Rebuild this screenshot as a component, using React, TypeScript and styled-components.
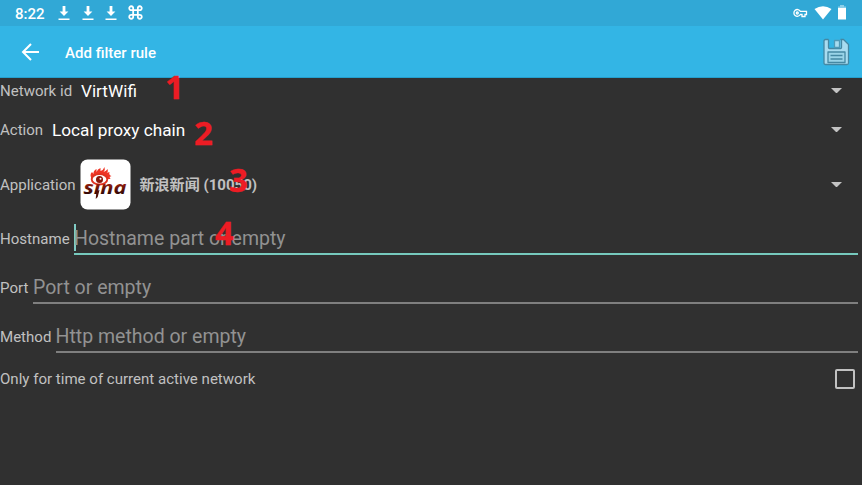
import React from "react";
import styled, { createGlobalStyle } from "styled-components";

const Global = createGlobalStyle`
  * { box-sizing: border-box; }
  body { margin: 0; background: #303030; overflow: hidden; }
`;
const Screen = styled.div`
  position: relative;
  width: 862px;
  height: 485px;
  display: flex;
  flex-direction: column;
  background: #303030;
  color: #c1c1c1;
  font: 400 15.05px/20px Roboto, "Noto Sans CJK SC", sans-serif;
  overflow: hidden;
  white-space: nowrap;
`;
const StatusBar = styled.header`
  height: 26px;
  flex: none;
  display: flex;
  align-items: center;
  background: #31a8d6;
  color: #fff;
  padding: 1px 16px 0 15px;
`;
const Clock = styled.time`
  font-weight: 500;
  width: 42px;
`;
const Notifications = styled.div`
  display: flex;
  gap: 9.7px;
  flex: 1;
  margin-top: -1px;
  svg { display: block; }
`;
const SystemIcons = styled.div`
  display: flex;
  align-items: center;
  gap: 6px;
  margin-top: -2px;
  svg { display: block; }
`;
const AppBar = styled.div`
  height: 52px;
  flex: none;
  display: flex;
  align-items: center;
  background: #33b5e5;
  border-bottom: 1px solid #249fcd;
  color: #fff;
  padding: 0 12px 0 21px;
  svg { display: block; }
`;
const Title = styled.h1`
  flex: 1;
  margin: 2px 0 0 25px;
  font-size: 15.05px;
  font-weight: 500;
`;
const Form = styled.main`
  display: flex;
  flex-direction: column;
`;
const Row = styled.div<{ $h: number }>`
  height: ${(p) => p.$h}px;
  display: flex;
  align-items: center;
`;
const Label = styled.label<{ $w?: number }>`
  width: ${(p) => (p.$w ? `${p.$w}px` : "auto")};
  flex: none;
`;
const Value = styled.span`
  flex: 1;
  color: #fff;
  font-size: 17.2px;
`;
const Arrow = styled.span`
  width: 11px;
  margin: -1px 20.5px 0 0;
  border: 5.5px solid transparent;
  border-top-color: #c3c3c3;
  border-bottom: 0;
`;
const AppName = styled.strong`
  flex: 1;
  margin-left: 9px;
  font-weight: 700;
`;
const AppIcon = styled.svg`
  display: block;
  width: 51px;
  height: 51px;
  flex: none;
`;
const Field = styled.div<{ $active?: boolean }>`
  flex: 1;
  height: 32px;
  margin: 1px 4px 0 0;
  display: flex;
  align-items: center;
  padding-top: 2px;
  color: #929292;
  font-size: 19.5px;
  border-bottom: 2px solid ${(p) => (p.$active ? "#76c9bd" : "#7f7f7f")};
`;
const Caret = styled.span`
  width: 2px;
  height: 27px;
  margin: -3px -2px 0 0;
  background: #80cbc4;
`;
const Checkbox = styled.span`
  width: 20px;
  height: 20px;
  margin: 0 7.5px 0 auto;
  border: 2px solid #c1c1c1;
  border-radius: 2px;
`;
const Marker = styled.span<{ $x: number; $y: number }>`
  position: absolute;
  left: ${(p) => p.$x}px;
  top: ${(p) => p.$y}px;
  color: #ed1c24;
  font: 700 33px/36px "Noto Sans", sans-serif;
  -webkit-text-stroke: 0.3px #ed1c24;
`;

const Download = () => (
  <svg width="14" height="16" viewBox="0 0 14 16" fill="#fff">
    <path d="M5.6 1h2.8v5.5h3L7 11 2.6 6.5h3zM1.5 13.6h11V15h-11z" />
  </svg>
);
const Command = () => (
  <svg width="15" height="15" viewBox="0 0 16 16" fill="none" stroke="#fff" strokeWidth="1.9">
    <path d="M5.5 5.5h5v5h-5zM5.5 5.5H3.7a2.1 2.1 0 1 1 1.8-1.8zM10.5 5.5V3.7a2.1 2.1 0 1 1 1.8 1.8zM10.5 10.5h1.8a2.1 2.1 0 1 1-1.8 1.8zM5.5 10.5v1.8a2.1 2.1 0 1 1-1.8-1.8z" />
  </svg>
);
const KeyIcon = () => (
  <svg width="15" height="10" viewBox="0 0 15 10" fill="none" stroke="#fff" strokeWidth="1.3">
    <path d="M7.3 3.3A3.4 3.4 0 1 0 7.3 6.5H9v2h3v-2h1.5V3.3z" />
    <circle cx="4.3" cy="5" r="1" />
  </svg>
);
const Wifi = () => (
  <svg width="18" height="14" viewBox="0 0 18 14" fill="#fff">
    <path d="M.5 3Q9-2.4 17.500 3L9 13.500z" />
  </svg>
);
const Battery = () => (
  <svg width="8" height="15" viewBox="0 0 8 15">
    <path d="M0 1.500h2V0h4v1.500h2V4H0z" fill="#8bcfe9" />
    <path d="M0 3h8v11.500H0z" fill="#fff" />
  </svg>
);
const Back = () => (
  <svg width="19" height="18" viewBox="0 0 19 18" fill="none" stroke="#fff" strokeWidth="2">
    <path d="M18 9H2M10 1L2 9l8 8" />
  </svg>
);
const Save = () => (
  <svg width="28" height="28" viewBox="0 0 28 28" stroke="#4588a3" strokeWidth="1.3" strokeLinejoin="round">
    <path d="M3.500 1.500H21.500l5 5V25q0 1.500-1.500 1.500H3.500Q2 26.500 2 25V3q0-1.500 1.500-1.500z" fill="#a8dcf0" />
    <path d="M6.500 0h12v9.500q0 1-1 1h-10q-1 0-1-1z" fill="#33b5e5" stroke="none" />
    <path d="M6.500 1.500v8q0 1 1 1h11q1 0 1-1v-8" fill="none" />
    <path d="M12.500 2.500h5v7h-5z" fill="#a8dcf0" stroke="#4f9ab8" />
    <path d="M6 14h17v10.500H6z" fill="#9ad4e8" />
    <path d="M8.500 17.500h12M8.500 21h12" strokeWidth="1.600" />
  </svg>
);

const SinaIcon = () => (
  <AppIcon viewBox="0 0 51 51">
    <defs>
      <linearGradient id="wordmark" x1="0" y1="0" x2="0" y2="1">
        <stop offset=".4" stopColor="#8c1c0d" />
        <stop offset=".8" stopColor="#300805" />
      </linearGradient>
    </defs>
    <rect x=".5" y=".5" width="50" height="50" rx="7" fill="#fff" />
    <path
      d="M12 20Q9 16 12 13l1.500 2q-.5-3 3-5v3q1-3 4-4v3q3-1 4-4 1 3-1 5 3-1 4-3 1 3-1 4l3-1q-1 3 2 4l-2 1 1 2z"
      fill="#ef3425"
    />
    <ellipse cx="19.500" cy="20.300" rx="7.800" ry="5.200" fill="#fff" stroke="#df3221" strokeWidth="1.900" />
    <circle cx="19.500" cy="20.600" r="3.500" fill="#8a160b" />
    <circle cx="20.500" cy="19.700" r="1" fill="#fff" />
    <text
      x="3.500"
      y="34.500"
      fill="url(#wordmark)"
      fontFamily="Open Sans, sans-serif"
      fontStyle="italic"
      fontWeight="700"
      fontSize="17"
      textLength="43"
      lengthAdjust="spacingAndGlyphs"
    >
      sına
    </text>
    <path d="M16.500 32l3-1-1.800 7-2 2z" fill="#4e0f08" />
  </AppIcon>
);

export default function App() {
  return (
    <Screen>
      <Global />
      <StatusBar>
        <Clock>8:22</Clock>
        <Notifications>
          <Download />
          <Download />
          <Download />
          <Command />
        </Notifications>
        <SystemIcons>
          <KeyIcon />
          <Wifi />
          <Battery />
        </SystemIcons>
      </StatusBar>
      <AppBar>
        <Back />
        <Title>Add filter rule</Title>
        <Save />
      </AppBar>
      <Form>
        <Row $h={26}>
          <Label $w={81}>Network id</Label>
          <Value>VirtWifi</Value>
          <Arrow />
        </Row>
        <Row $h={52}>
          <Label $w={52}>Action</Label>
          <Value>Local proxy chain</Value>
          <Arrow />
        </Row>
        <Row $h={57}>
          <Label $w={79.5}>Application</Label>
          <SinaIcon />
          <AppName>新浪新闻 (10050)</AppName>
          <Arrow />
        </Row>
        <Row $h={51}>
          <Label $w={74}>Hostname</Label>
          <Field $active>
            <Caret />
            Hostname part or empty
          </Field>
        </Row>
        <Row $h={47}>
          <Label $w={33}>Port</Label>
          <Field>Port or empty</Field>
        </Row>
        <Row $h={51}>
          <Label $w={55.5}>Method</Label>
          <Field>Http method or empty</Field>
        </Row>
        <Row $h={33}>
          <Label>Only for time of current active network</Label>
          <Checkbox />
        </Row>
      </Form>
      <Marker $x={165} $y={69}>1</Marker>
      <Marker $x={194} $y={115}>2</Marker>
      <Marker $x={229} $y={162}>3</Marker>
      <Marker $x={215} $y={215}>4</Marker>
    </Screen>
  );
}
